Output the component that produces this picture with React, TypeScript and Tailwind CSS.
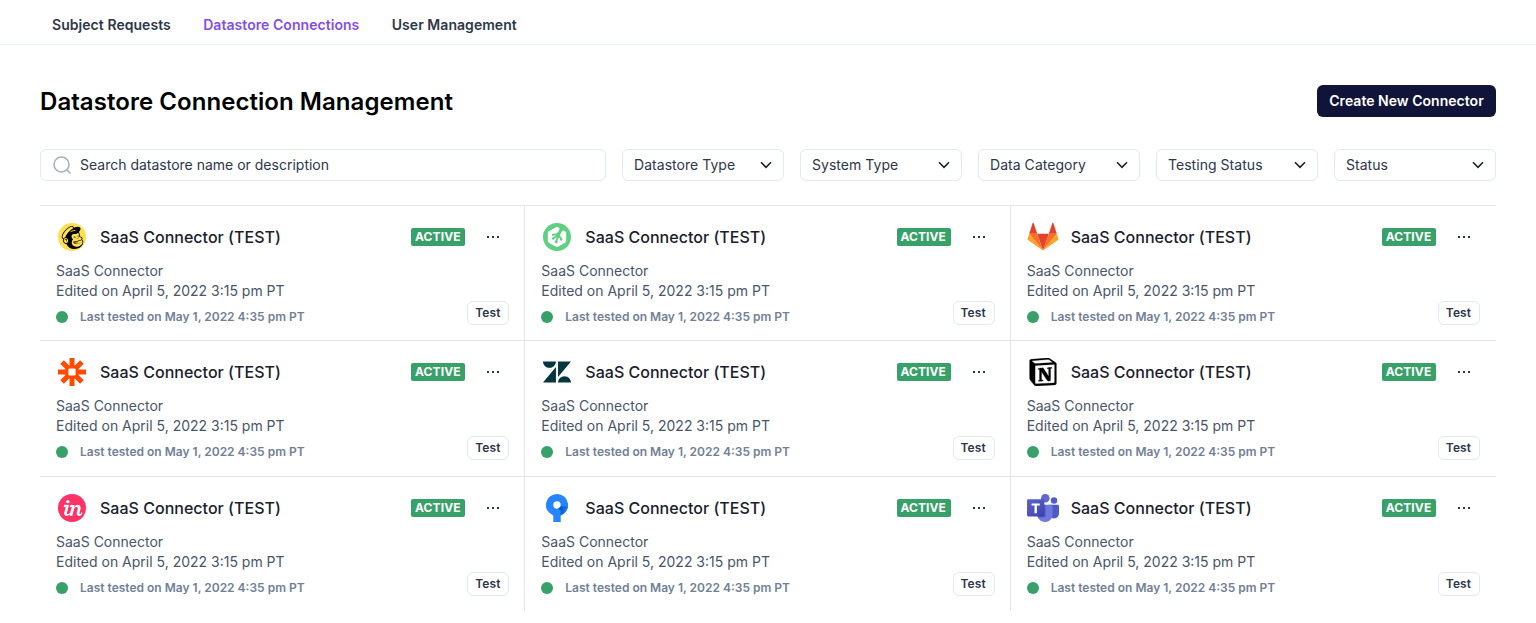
import { SiMailchimp, SiTreehouse, SiZendesk, SiNotion, SiInvision } from 'react-icons/si';
import type { ReactNode } from 'react';

const Mailchimp = () => (
  <span className="flex size-7 items-center justify-center rounded-full bg-[#ffe04f]">
    <SiMailchimp className="size-[23px] text-black" />
  </span>
);

const Treehouse = () => (
  <span className="flex size-7 items-center justify-center rounded-full bg-[#5fcf80]">
    <SiTreehouse className="size-5 text-white" />
  </span>
);

const Gitlab = () => (
  <svg viewBox="0 0 32 32" className="size-8">
    <path d="M16 29.400 21.900 12.800H10.100z" fill="#e24329" />
    <path d="M16 29.400 10.100 12.800H2.200z" fill="#fc6d26" />
    <path d="M2.200 12.800.6 17.800c-.2.500 0 1 .4 1.300L16 29.400z" fill="#fca326" />
    <path d="M2.200 12.800h8L6.700 2.200c-.2-.6-.9-.6-1.100 0z" fill="#e24329" />
    <path d="M16 29.400 21.900 12.800h7.900z" fill="#fc6d26" />
    <path d="m29.800 12.800 1.600 5c.2.500 0 1-.4 1.300L16 29.400z" fill="#fca326" />
    <path d="M29.800 12.800h-8l3.500-10.600c.2-.6.900-.6 1.100 0z" fill="#e24329" />
  </svg>
);

const Zapier = () => (
  <svg viewBox="0 0 28 28" className="size-7">
    <g stroke="#ff4a00" strokeWidth="5">
      <path d="M14 0v9M14 19v9M0 14h9M19 14h9M4.100 4.100l6.600 6.600M17.300 17.300l6.600 6.600M23.900 4.100l-6.600 6.600M10.700 17.300l-6.600 6.600" />
    </g>
    <rect x="9" y="9" width="10" height="10" rx="2.500" fill="#fff" stroke="#ff4a00" strokeWidth="2.800" />
  </svg>
);

const Zendesk = () => <SiZendesk className="size-7 text-[#03363d]" />;

const Notion = () => <SiNotion className="size-7 text-black" stroke="currentColor" strokeWidth="0.2" />;

const Invision = () => (
  <span className="flex size-7 items-center justify-center overflow-hidden rounded-full">
    <SiInvision className="size-[29px] shrink-0 text-[#ff3366]" />
  </span>
);

const Sourcetree = () => (
  <svg viewBox="0 0 32 32" className="size-8">
    <defs>
      <linearGradient id="stem" x1="18.500" y1="17.500" x2="24.500" y2="20.500" gradientUnits="userSpaceOnUse">
        <stop offset="0" stopColor="#0052cc" />
        <stop offset="1" stopColor="#1f78f5" />
      </linearGradient>
    </defs>
    <path
      fillRule="evenodd"
      d="M16 2a11 11 0 0 0-3.700 21.400V30h7.400v-6.600A11 11 0 0 0 16 2zm0 7.300a3.700 3.700 0 1 1 0 7.400 3.700 3.700 0 0 1 0-7.400z"
      fill="#2684ff"
    />
    <path d="M16 16.700c1.500 0 2.700-.9 3.400-2.100l7.400-.3c-.5 4.300-3.300 7.700-7.100 9.100v-4.300c0-1.400-1.500-2.400-3.700-2.400z" fill="url(#stem)" />
  </svg>
);

const Teams = () => (
  <svg viewBox="0 0 32 32" className="size-8">
    <defs>
      <linearGradient id="teamsTile" x1="2" y1="7" x2="16" y2="25" gradientUnits="userSpaceOnUse">
        <stop offset="0" stopColor="#5a62c3" />
        <stop offset=".5" stopColor="#4d55bd" />
        <stop offset="1" stopColor="#3940ab" />
      </linearGradient>
    </defs>
    <circle cx="27" cy="8.500" r="3.200" fill="#5059c9" />
    <path d="M22 12.700h8.700c.7 0 1.300.6 1.300 1.300v7.200c0 3-2.200 5.200-5 5.200-3 0-5-2.200-5-5.200z" fill="#5059c9" />
    <circle cx="18.300" cy="6.200" r="4.300" fill="#5f67d0" />
    <path d="M11 12.700h13.300c.8 0 1.300.6 1.300 1.300v8.200c0 4.600-3.300 7.700-7.500 7.700S10.300 26.800 10.300 22.200v-8.700c0-.5.200-.8.700-.8z" fill="#6f77e0" />
    <path d="M10.300 12.700h8.200v11c0 .9-.7 1.600-1.600 1.600h-6c-.4-1-.6-2-.6-3.100z" fill="#5259b8" />
    <rect x="0" y="7.200" width="17.300" height="17.300" rx="1.400" fill="url(#teamsTile)" />
    <path d="M4.600 11.400h8.200v2.200H9.900v7.700H7.500v-7.700H4.600z" fill="#fff" />
  </svg>
);

const connectors: { id: string; icon: ReactNode }[] = [
  { id: 'mailchimp', icon: <Mailchimp /> },
  { id: 'treehouse', icon: <Treehouse /> },
  { id: 'gitlab', icon: <Gitlab /> },
  { id: 'zapier', icon: <Zapier /> },
  { id: 'zendesk', icon: <Zendesk /> },
  { id: 'notion', icon: <Notion /> },
  { id: 'invision', icon: <Invision /> },
  { id: 'sourcetree', icon: <Sourcetree /> },
  { id: 'teams', icon: <Teams /> },
];

const filters = ['Datastore Type', 'System Type', 'Data Category', 'Testing Status', 'Status'];

function Filter({ label }: { label: string }) {
  return (
    <button className="flex h-8 w-[162px] items-center justify-between rounded-md border border-[#e2e8f0] px-[11px] text-sm tracking-[0.04px] text-[#2d3748]">
      {label}
      <svg viewBox="0 0 12 8" className="h-2 w-3" fill="none" stroke="#1a202c" strokeWidth="1.600">
        <path d="m1 1.300 5 5 5-5" />
      </svg>
    </button>
  );
}

function ConnectorCard({ icon }: { icon: ReactNode }) {
  return (
    <article className="flex flex-col border-t border-[#e5e5e5] px-4 pt-[15px] [&:not(:nth-child(3n))]:border-r [&:not(:nth-child(3n))]:pr-[15px]">
      <div className="flex h-8 items-center">
        <span className="flex size-8 items-center justify-center">{icon}</span>
        <h2 className="ml-3 flex-1 text-base font-medium tracking-[0.02px] text-[#1a202c]">SaaS Connector (TEST)</h2>
        <span className="flex h-[18px] w-[54px] items-center justify-center rounded-xs bg-[#38a169] pr-px text-xs font-bold tracking-[0.1px] text-white">
          ACTIVE
        </span>
        <button aria-label="More" className="mr-2.5 ml-[22px] flex w-3 justify-between">
          <i className="size-0.5 bg-[#2d3748]" />
          <i className="size-0.5 bg-[#2d3748]" />
          <i className="size-0.5 bg-[#2d3748]" />
        </button>
      </div>
      <div className="flex items-end justify-between">
        <div className="pt-2 text-sm leading-5 text-[#4a5568]">
          <p>SaaS Connector</p>
          <p>Edited on April 5, 2022 3:15 pm PT</p>
          <p className="mt-1.5 flex items-center text-xs leading-5 font-semibold text-[#718096]">
            <span className="mr-3 size-3 rounded-full bg-[#38a169]" />
            Last tested on May 1, 2022 4:35 pm PT
          </p>
        </div>
        <button className="mb-0.5 flex h-6 w-[42px] items-center justify-center rounded-md border border-[#e2e8f0] pr-px text-xs font-semibold tracking-[0.1px] text-[#2d3748]">
          Test
        </button>
      </div>
    </article>
  );
}

export default function App() {
  return (
    <div className="min-h-[623px] bg-white font-['Inter',sans-serif]">
      <nav className="flex h-[45px] items-center gap-[32.4px] border-b border-[#edf2f7] pt-1.5 pb-px pl-[52px] text-sm font-semibold tracking-[0.05px] text-[#2d3748]">
        <a>Subject Requests</a>
        <a className="text-[#824ef2]">Datastore Connections</a>
        <a>User Management</a>
      </nav>
      <main className="px-10 pt-10">
        <header className="flex h-8 items-center justify-between">
          <h1 className="pt-0.5 text-2xl font-semibold tracking-[0.055px] text-black">Datastore Connection Management</h1>
          <button className="h-8 w-[179px] rounded-md bg-[#111439] text-sm font-semibold tracking-[0.03px] text-white">
            Create New Connector
          </button>
        </header>
        <div className="mt-8 flex gap-4">
          <div className="flex h-8 flex-1 items-center rounded-md border border-[#e2e8f0] pl-3 text-sm text-[#2d3748]">
            <svg viewBox="0 0 18 18" className="mr-[9px] size-[18px]" fill="none" stroke="#a0aec0" strokeWidth="1.500">
              <circle cx="8.500" cy="8.500" r="7.500" />
              <path d="m13.500 13.500 4 4" />
            </svg>
            Search datastore name or description
          </div>
          {filters.map((label) => (
            <Filter key={label} label={label} />
          ))}
        </div>
        <section className="mt-6 grid grid-cols-3 grid-rows-[135px_136px_135px]">
          {connectors.map((c) => (
            <ConnectorCard key={c.id} icon={c.icon} />
          ))}
        </section>
      </main>
    </div>
  );
}
